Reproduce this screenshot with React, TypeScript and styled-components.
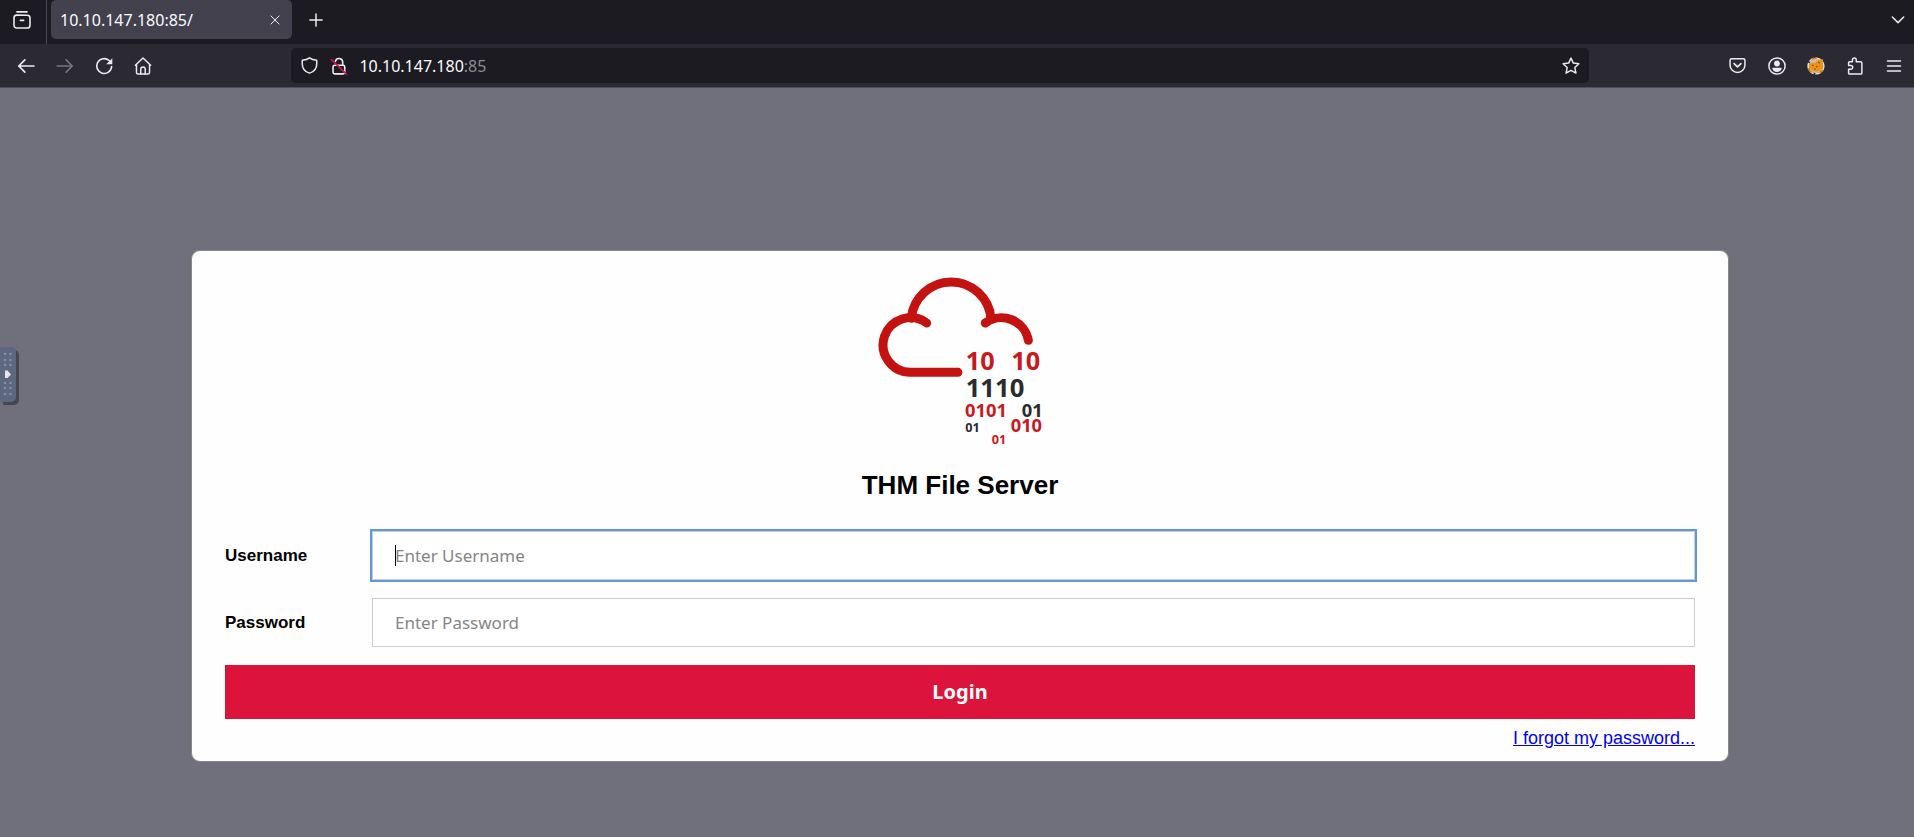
import React from "react";
import styled, { createGlobalStyle } from "styled-components";

const uiFont = `"Noto Sans", "Open Sans", sans-serif`;
const pageFont = `"Liberation Sans", Arial, sans-serif`;

const GlobalStyle = createGlobalStyle`
  * { box-sizing: border-box; }
  html { background: #70707c; }
  body { margin: 0; font-family: ${pageFont}; }
`;

const Browser = styled.div`
  display: flex;
  flex-direction: column;
  min-height: 100vh;
  background: #70707c;
`;

const TabBar = styled.header`
  display: flex;
  align-items: flex-start;
  height: 44px;
  background: #1c1b22;
  color: #fbfbfe;
`;

const IconButton = styled.button<{ $width?: number; $dim?: boolean }>`
  display: flex;
  align-items: center;
  justify-content: center;
  flex: none;
  width: ${(p) => p.$width ?? 39}px;
  height: 40px;
  padding: 0;
  border: 0;
  background: none;
  color: ${(p) => (p.$dim ? "#77767e" : "#ececf0")};
`;

const ViewSlot = styled.div`
  display: flex;
  width: 47px;
  height: 44px;
  margin-right: 4px;
  padding-left: 2px;
  border-right: 1px solid #4c4b54;
`;

const Tab = styled.div`
  display: flex;
  align-items: center;
  width: 241px;
  height: 39px;
  padding-left: 9px;
  border-radius: 5px;
  background: #42414d;
  font: 16px/20px ${uiFont};
`;

const TabTitle = styled.span`
  flex: 1;
`;

const BarSpace = styled.div`
  flex: 1;
`;

const Toolbar = styled.nav`
  display: flex;
  align-items: center;
  height: 44px;
  padding: 0 1px 0 6px;
  border-bottom: 1px solid #4f4e59;
  background: #2b2a33;
`;

const AddressBar = styled.div`
  display: flex;
  align-items: center;
  flex: 10;
  height: 35px;
  padding-left: 3px;
  border-radius: 5px;
  background: #1c1b22;
`;

const Address = styled.div`
  flex: 1;
  padding-left: 5px;
  color: #fbfbfe;
  font: 16px/20px ${uiFont};
`;

const Port = styled.span`
  color: #8c8b93;
`;

const Page = styled.main`
  padding: 162px 185px 75px 191px;
`;

const Card = styled.form`
  display: flex;
  flex-direction: column;
  padding: 26px 33px 13px;
  border: 1px solid #888888;
  border-radius: 9px;
  background: #fefefe;
`;

const Logo = styled.svg`
  align-self: center;
  width: 164px;
  height: 172px;
  font-family: "Open Sans", "Noto Sans", sans-serif;
  font-weight: 700;
`;

const Title = styled.h1`
  margin: 21px 0 31px;
  font-size: 26px;
  line-height: 30px;
  font-weight: 700;
  text-align: center;
  color: #000;
`;

const Field = styled.div`
  display: flex;
  align-items: center;
  margin-bottom: 18px;
`;

const Label = styled.label`
  width: 147px;
  font-size: 17px;
  line-height: 20px;
  font-weight: 700;
  color: #000;
`;

const InputWrap = styled.div`
  position: relative;
  flex: 1;
`;

const TextInput = styled.input<{ $active?: boolean }>`
  display: block;
  width: 100%;
  height: 49px;
  padding: 0 22px;
  border: 1px solid #cccccc;
  outline: ${(p) => (p.$active ? "2px solid #5b99e4" : "none")};
  border-radius: 0;
  background: #fff;
  font: 17px/24px ${uiFont};
  caret-color: transparent;
  &::placeholder {
    color: #858585;
    opacity: 1;
  }
`;

const Caret = styled.span`
  position: absolute;
  top: 14px;
  left: 23px;
  width: 1px;
  height: 21px;
  background: #000;
`;

const LoginButton = styled.button`
  height: 54px;
  padding: 0;
  border: 0;
  background: #dc143c;
  color: #fff;
  font: 700 20px/28px ${uiFont};
`;

const ForgotLink = styled.a`
  align-self: flex-end;
  margin-top: 9px;
  font-size: 18px;
  line-height: 20px;
  color: #0000ee;
`;

const Handle = styled.button`
  position: absolute;
  top: 347px;
  left: 0;
  width: 16px;
  height: 55px;
  padding: 0;
  border: 0;
  border-radius: 0 5px 5px 0;
  background: #5b687f;
  box-shadow: 3px 3px 0 #45464f;
`;

type IconProps = { size?: number; weight?: number; children: React.ReactNode };

const Icon = ({ size = 18, weight = 1.3, children }: IconProps) => (
  <svg
    width={size}
    height={size}
    viewBox="0 0 16 16"
    fill="none"
    stroke="currentColor"
    strokeWidth={weight}
    strokeLinecap="round"
    strokeLinejoin="round"
    aria-hidden="true"
  >
    {children}
  </svg>
);

const dotRows = [7, 13, 18, 36, 41, 47];

export default function App() {
  return (
    <Browser>
      <GlobalStyle />
      <TabBar>
        <ViewSlot>
          <IconButton aria-label="Firefox View">
            <Icon weight={1.4}>
              <path d="M3.500 .8h9" />
              <path d="M.9 6.200C.9 4.500 1.900 3.700 3.300 3.700h9.400c1.400 0 2.400.8 2.400 2.500v6.400c0 1.700-1 2.500-2.400 2.500H3.300c-1.400 0-2.400-.8-2.400-2.500z" />
              <path d="M6.500 8.300h3" />
            </Icon>
          </IconButton>
        </ViewSlot>
        <Tab>
          <TabTitle>10.10.147.180:85/</TabTitle>
          <IconButton $width={34} aria-label="Close tab">
            <Icon size={10} weight={1.6}>
              <path d="M1.500 1.500l13 13M14.500 1.500l-13 13" />
            </Icon>
          </IconButton>
        </Tab>
        <IconButton $width={48} aria-label="New tab">
          <Icon size={14} weight={1.7}>
            <path d="M8 1v14M1 8h14" />
          </Icon>
        </IconButton>
        <BarSpace />
        <IconButton $width={32} aria-label="List all tabs">
          <Icon size={14} weight={1.7}>
            <path d="M1.500 4.500l6.500 6.500L14.500 4.500" />
          </Icon>
        </IconButton>
      </TabBar>

      <Toolbar>
        <IconButton aria-label="Back">
          <Icon weight={1.5}>
            <path d="M15 8H1.500M7 2.600L1.600 8 7 13.400" />
          </Icon>
        </IconButton>
        <IconButton $dim aria-label="Forward">
          <Icon weight={1.4}>
            <path d="M1 8h13.500M9 2.600L14.400 8 9 13.400" />
          </Icon>
        </IconButton>
        <IconButton aria-label="Reload">
          <Icon weight={1.4}>
            <path d="M12.600 3.100A6.600 6.600 0 1 0 14.800 8.500" />
            <path d="M15.400 1v5.400H10z" fill="currentColor" stroke="none" />
          </Icon>
        </IconButton>
        <IconButton aria-label="Home">
          <Icon>
            <path d="M1.200 7.400L8 .9l6.800 6.500M2.200 6.700v7c0 .9.500 1.400 1.400 1.400h8.800c.9 0 1.400-.5 1.400-1.400v-7" />
            <path d="M6 15v-4.200a2 2 0 0 1 4 0V15" />
          </Icon>
        </IconButton>
        <BarSpace />
        <AddressBar>
          <IconButton $width={30} aria-label="Tracking protection">
            <Icon size={17} weight={1.4}>
              <path d="M8 .8C6.200 2.200 3.800 2.900 1.200 3v3.500c0 4 2.400 7.300 6.800 8.700 4.400-1.400 6.800-4.700 6.800-8.700V3C12.200 2.900 9.800 2.200 8 .8z" />
            </Icon>
          </IconButton>
          <IconButton $width={30} aria-label="Connection not secure">
            <Icon weight={1.4}>
              <rect x="2.700" y="7.400" width="10.400" height="7.600" rx="1.500" />
              <path d="M4.800 3.800a3.300 3.300 0 0 1 6.500.8v2.700" />
              <path d="M1.300 2.300L14.600 15.300" stroke="#d8124a" strokeWidth="1.500" />
            </Icon>
          </IconButton>
          <Address>
            10.10.147.180<Port>:85</Port>
          </Address>
          <IconButton $width={36} aria-label="Bookmark this page">
            <Icon>
              <path d="M8 1l2.100 4.400 4.900.6-3.600 3.400 1 4.900L8 11.900l-4.400 2.400 1-4.900L1 6l4.900-.6z" />
            </Icon>
          </IconButton>
        </AddressBar>
        <BarSpace />
        <IconButton aria-label="Save to Pocket">
          <Icon size={17} weight={1.4}>
            <path d="M2.500 1.700h11c1 0 1.500.6 1.500 1.500v4.400a7 6.900 0 0 1-14 0V3.200c0-.9.500-1.500 1.500-1.500z" />
            <path d="M4.800 6.200L8 9.200l3.200-3" strokeWidth="1.600" />
          </Icon>
        </IconButton>
        <IconButton aria-label="Account">
          <Icon>
            <circle cx="8" cy="8" r="7.200" />
            <circle cx="8" cy="5.800" r="2.600" fill="currentColor" stroke="none" />
            <path d="M3.800 9.600h8.400c0 2.300-1.800 3.700-4.200 3.700s-4.200-1.400-4.200-3.700z" fill="currentColor" stroke="none" />
          </Icon>
        </IconButton>
        <IconButton aria-label="FoxyProxy">
          <Icon>
            <circle cx="8" cy="8" r="6.400" fill="#c9bfae" stroke="none" />
            <circle cx="8" cy="8" r="7" stroke="#eceae6" strokeDasharray="5 1.500" strokeLinecap="butt" />
            <path d="M1.200 10.500l2.300 3.300M4.500 1.500L9 .8M11.500 14.300l2.500-2.300" stroke="#dd7c10" />
            <path
              d="M1.800 6.500L4.500 5l2.700.3L10 2.500l4.400-.6-.6 3.600.8 3.300-2.600 3.300-3.600 1-3.700-.8-2.700-2.200z"
              fill="#ee920f"
              stroke="none"
            />
            <path d="M5 7.300l.6.200M10.300 4.600l.7.600M8.600 8.300l.4.300M7 10.700l.4.100" stroke="#6b4513" strokeWidth="1" />
          </Icon>
        </IconButton>
        <IconButton aria-label="Extensions">
          <Icon>
            <path d="M5.700 4.300V2.500a1.700 1.700 0 0 1 3.400 0v1.800h4c.6 0 1 .4 1 1v8.900c0 .6-.4 1-1 1H3.300c-.6 0-1-.4-1-1v-3.300h2a1.500 1.500 0 0 0 0-3.400h-2V5.300c0-.6.4-1 1-1z" />
          </Icon>
        </IconButton>
        <IconButton aria-label="Application menu">
          <Icon size={16} weight={1.5}>
            <path d="M1.500 3h13M1.500 8h13M1.500 13h13" />
          </Icon>
        </IconButton>
      </Toolbar>

      <Page>
        <Card onSubmit={(e) => e.preventDefault()}>
          <Logo viewBox="54 51 492 516" role="img" aria-label="TryHackMe">
            <g fill="none" stroke="#c41210" strokeWidth="27" strokeLinecap="round">
              <path d="M200 189A82 82 0 1 0 151 337H294" />
              <path d="M154 175A120 120 0 0 1 393 175" />
              <path d="M376 189A82 82 0 0 1 505 241" />
            </g>
            <g fill="#c8191c">
              <text x="317" y="329" fontSize="76">10</text>
              <text x="454" y="329" fontSize="76">10</text>
              <text x="315" y="472" fontSize="55">0101</text>
              <text x="452" y="516" fontSize="55">010</text>
              <text x="395" y="552" fontSize="38">01</text>
            </g>
            <g fill="#2b2b2b">
              <text x="317" y="412" fontSize="77">1110</text>
              <text x="485" y="472" fontSize="55">01</text>
              <text x="316" y="516" fontSize="38">01</text>
            </g>
          </Logo>
          <Title>THM File Server</Title>
          <Field>
            <Label htmlFor="username">Username</Label>
            <InputWrap>
              <TextInput id="username" type="text" placeholder="Enter Username" $active />
              <Caret />
            </InputWrap>
          </Field>
          <Field>
            <Label htmlFor="password">Password</Label>
            <InputWrap>
              <TextInput id="password" type="password" placeholder="Enter Password" />
            </InputWrap>
          </Field>
          <LoginButton type="submit">Login</LoginButton>
          <ForgotLink href="#forgot">I forgot my password...</ForgotLink>
        </Card>
      </Page>

      <Handle type="button" aria-label="Open control bar">
        <svg width="16" height="55" viewBox="0 0 16 55" aria-hidden="true">
          {dotRows.map((y) => (
            <g key={y} fill="#8090a5">
              <circle cx="5" cy={y} r="1.300" />
              <circle cx="10.500" cy={y} r="1.300" />
            </g>
          ))}
          <path d="M5 23.500h2.500l3.500 4-3.500 3.500H5z" fill="#e6e6e6" />
        </svg>
      </Handle>
    </Browser>
  );
}
